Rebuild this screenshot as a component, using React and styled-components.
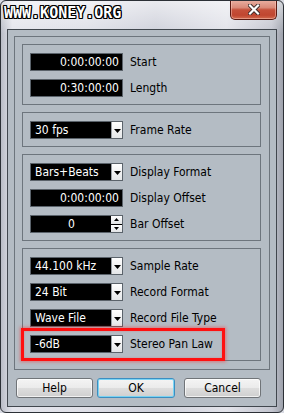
import { createGlobalStyle } from "styled-components";
import styled from "styled-components";

const GlobalStyle = createGlobalStyle`
  html, body {
    margin: 0;
    padding: 0;
    background: #d8dae2;
    overflow: hidden;
  }
  * { box-sizing: border-box; }
`;

const uiFont = `"Liberation Sans Narrow", "DejaVu Sans Condensed", "Liberation Sans", Arial, sans-serif`;

const Window = styled.div`
  width: 284px;
  height: 413px;
  border: 1px solid #2c3036;
  border-radius: 6px;
  display: flex;
  flex-direction: column;
  overflow: hidden;
  background:
    linear-gradient(180deg, rgba(255,255,255,0.55) 0%, rgba(255,255,255,0) 8%),
    linear-gradient(90deg, #b9bcc6 0%, #e4e5ec 4%, #dfe0e8 30%, #cfd1db 55%, #e2e3ea 80%, #c3c5cf 96%, #9ea2ac 100%);
`;

const TitleBar = styled.div`
  height: 28px;
  flex: none;
  display: flex;
  align-items: flex-start;
  justify-content: space-between;
`;

const Title = styled.div`
  margin: 3px 0 0 3px;
  font-family: "DejaVu Sans Mono", monospace;
  font-weight: bold;
  font-size: 15px;
  line-height: 18px;
  letter-spacing: 0px;
  color: #fff;
  text-shadow:
    1px 0 0 #000, -1px 0 0 #000, 0 1px 0 #000, 0 -1px 0 #000,
    1px 1px 0 #000, -1px -1px 0 #000, 1px -1px 0 #000, -1px 1px 0 #000;
`;

const CloseButton = styled.div`
  width: 47px;
  height: 20px;
  margin: -1px 6px 0 0;
  border: 1px solid #5a1a12;
  border-top: none;
  border-radius: 0 0 5px 5px;
  background: linear-gradient(180deg, #eab1a3 0%, #d98a79 40%, #c5503a 52%, #c04630 80%, #d26a4e 100%);
  box-shadow: inset 0 0 0 1px rgba(255, 210, 200, 0.45);
  display: flex;
  align-items: center;
  justify-content: center;
`;

const Client = styled.div`
  flex: none;
  height: 378px;
  margin: 0 6px;
  border: 1px solid #41474e;
  background: #b4bcc4;
  padding: 6px 6px 8px 6px;
  display: flex;
  flex-direction: column;
  gap: 8px;
`;

const Panel = styled.div`
  height: 334px;
  border: 1px solid #6d757d;
  padding: 7px 8px 8px 7px;
  display: flex;
  flex-direction: column;
  gap: 7px;
`;

const Group = styled.div`
  border: 1px solid #6d757d;
  padding: 8px 7px 7px 7px;
  display: flex;
  flex-direction: column;
  gap: 8px;
`;

const Row = styled.div`
  position: relative;
  display: flex;
  align-items: center;
  gap: 7px;
  height: 18px;
`;

const Field = styled.div`
  position: relative;
  width: 93px;
  height: 18px;
  flex: none;
  background: #000;
  border: 1px solid #5b636b;
  color: #fff;
  font-family: ${uiFont};
  font-size: 12px;
  line-height: 16px;
  padding: 0 ${(p) => (p.$align === "right" ? "3px" : p.$pad || "4px")} 0 4px;
  text-align: ${(p) => p.$align || "left"};
  white-space: nowrap;
`;

const DropButton = styled.div`
  position: absolute;
  top: 0;
  right: 0;
  width: 11px;
  height: 16px;
  background: linear-gradient(180deg, #ffffff, #e4e6e8);
  border-left: 1px solid #9aa0a6;
  display: flex;
  align-items: center;
  justify-content: center;
  padding-top: 2px;
`;

const SpinBox = styled.div`
  position: absolute;
  top: 0;
  right: 0;
  width: 11px;
  height: 16px;
  display: flex;
  flex-direction: column;
  gap: 1px;
  background: #000;
`;

const SpinHalf = styled.div`
  flex: 1;
  background: linear-gradient(180deg, #ffffff, #e2e4e6);
  display: flex;
  align-items: center;
  justify-content: center;
`;

const Label = styled.span`
  font-family: ${uiFont};
  font-size: 12px;
  color: #000;
  white-space: nowrap;
`;

const Highlight = styled.div`
  position: absolute;
  left: -9px;
  top: -7px;
  width: 204px;
  height: 33px;
  border: 3px solid #ff1010;
  box-shadow: 0 0 3px 1px rgba(255, 40, 40, 0.45), inset 0 0 2px rgba(255, 40, 40, 0.4);
  pointer-events: none;
`;

const ButtonRow = styled.div`
  display: flex;
  height: 20px;
`;

const Button = styled.div`
  width: ${(p) => p.$w}px;
  margin-left: ${(p) => p.$ml}px;
  height: 20px;
  border: 1px solid ${(p) => (p.$default ? "#3c8ec0" : "#707478")};
  border-radius: 3px;
  background: linear-gradient(180deg, #f4f4f4 0%, #ebebeb 48%, #dddddd 52%, #cfcfcf 100%);
  box-shadow: inset 0 0 0 1px ${(p) => (p.$default ? "rgba(110, 210, 245, 0.9)" : "rgba(255,255,255,0.7)")};
  font-family: ${uiFont};
  font-size: 12px;
  color: #000;
  display: flex;
  align-items: center;
  justify-content: center;
`;

const Down = () => (
  <svg width="7" height="4" viewBox="0 0 7 4">
    <path d="M0 0h7L3.5 4z" fill="#000" />
  </svg>
);

const Up = () => (
  <svg width="5" height="3" viewBox="0 0 5 3">
    <path d="M0 3h5L2.5 0z" fill="#000" />
  </svg>
);

const SmallDown = () => (
  <svg width="5" height="3" viewBox="0 0 5 3">
    <path d="M0 0h5L2.5 3z" fill="#000" />
  </svg>
);

const Time = ({ value, label }) => (
  <Row>
    <Field $align="right">{value}</Field>
    <Label>{label}</Label>
  </Row>
);

const Select = ({ value, label, children }) => (
  <Row>
    <Field>
      {value}
      <DropButton>
        <Down />
      </DropButton>
    </Field>
    <Label>{label}</Label>
    {children}
  </Row>
);

export default function App() {
  return (
    <>
      <GlobalStyle />
      <Window>
        <TitleBar>
          <Title>WWW.KONEY.ORG</Title>
          <CloseButton>
            <svg width="12" height="11" viewBox="0 0 12 11">
              <path d="M2 1.5l8 8M10 1.5l-8 8" stroke="#3a2a28" strokeWidth="4" strokeLinecap="square" />
              <path d="M2 1.5l8 8M10 1.5l-8 8" stroke="#ffffff" strokeWidth="2.2" strokeLinecap="square" />
            </svg>
          </CloseButton>
        </TitleBar>
        <Client>
          <Panel>
            <Group>
              <Time value="0:00:00:00" label="Start" />
              <Time value="0:30:00:00" label="Length" />
            </Group>
            <Group>
              <Select value="30 fps" label="Frame Rate" />
            </Group>
            <Group>
              <Select value="Bars+Beats" label="Display Format" />
              <Time value="0:00:00:00" label="Display Offset" />
              <Row>
                <Field $align="center" $pad="14px">
                  0
                  <SpinBox>
                    <SpinHalf>
                      <Up />
                    </SpinHalf>
                    <SpinHalf>
                      <SmallDown />
                    </SpinHalf>
                  </SpinBox>
                </Field>
                <Label>Bar Offset</Label>
              </Row>
            </Group>
            <Group>
              <Select value="44.100 kHz" label="Sample Rate" />
              <Select value="24 Bit" label="Record Format" />
              <Select value="Wave File" label="Record File Type" />
              <Select value="-6dB" label="Stereo Pan Law">
                <Highlight />
              </Select>
            </Group>
          </Panel>
          <ButtonRow>
            <Button $w={77} $ml={2}>Help</Button>
            <Button $w={78} $ml={4} $default>OK</Button>
            <Button $w={77} $ml={9}>Cancel</Button>
          </ButtonRow>
        </Client>
      </Window>
    </>
  );
}
